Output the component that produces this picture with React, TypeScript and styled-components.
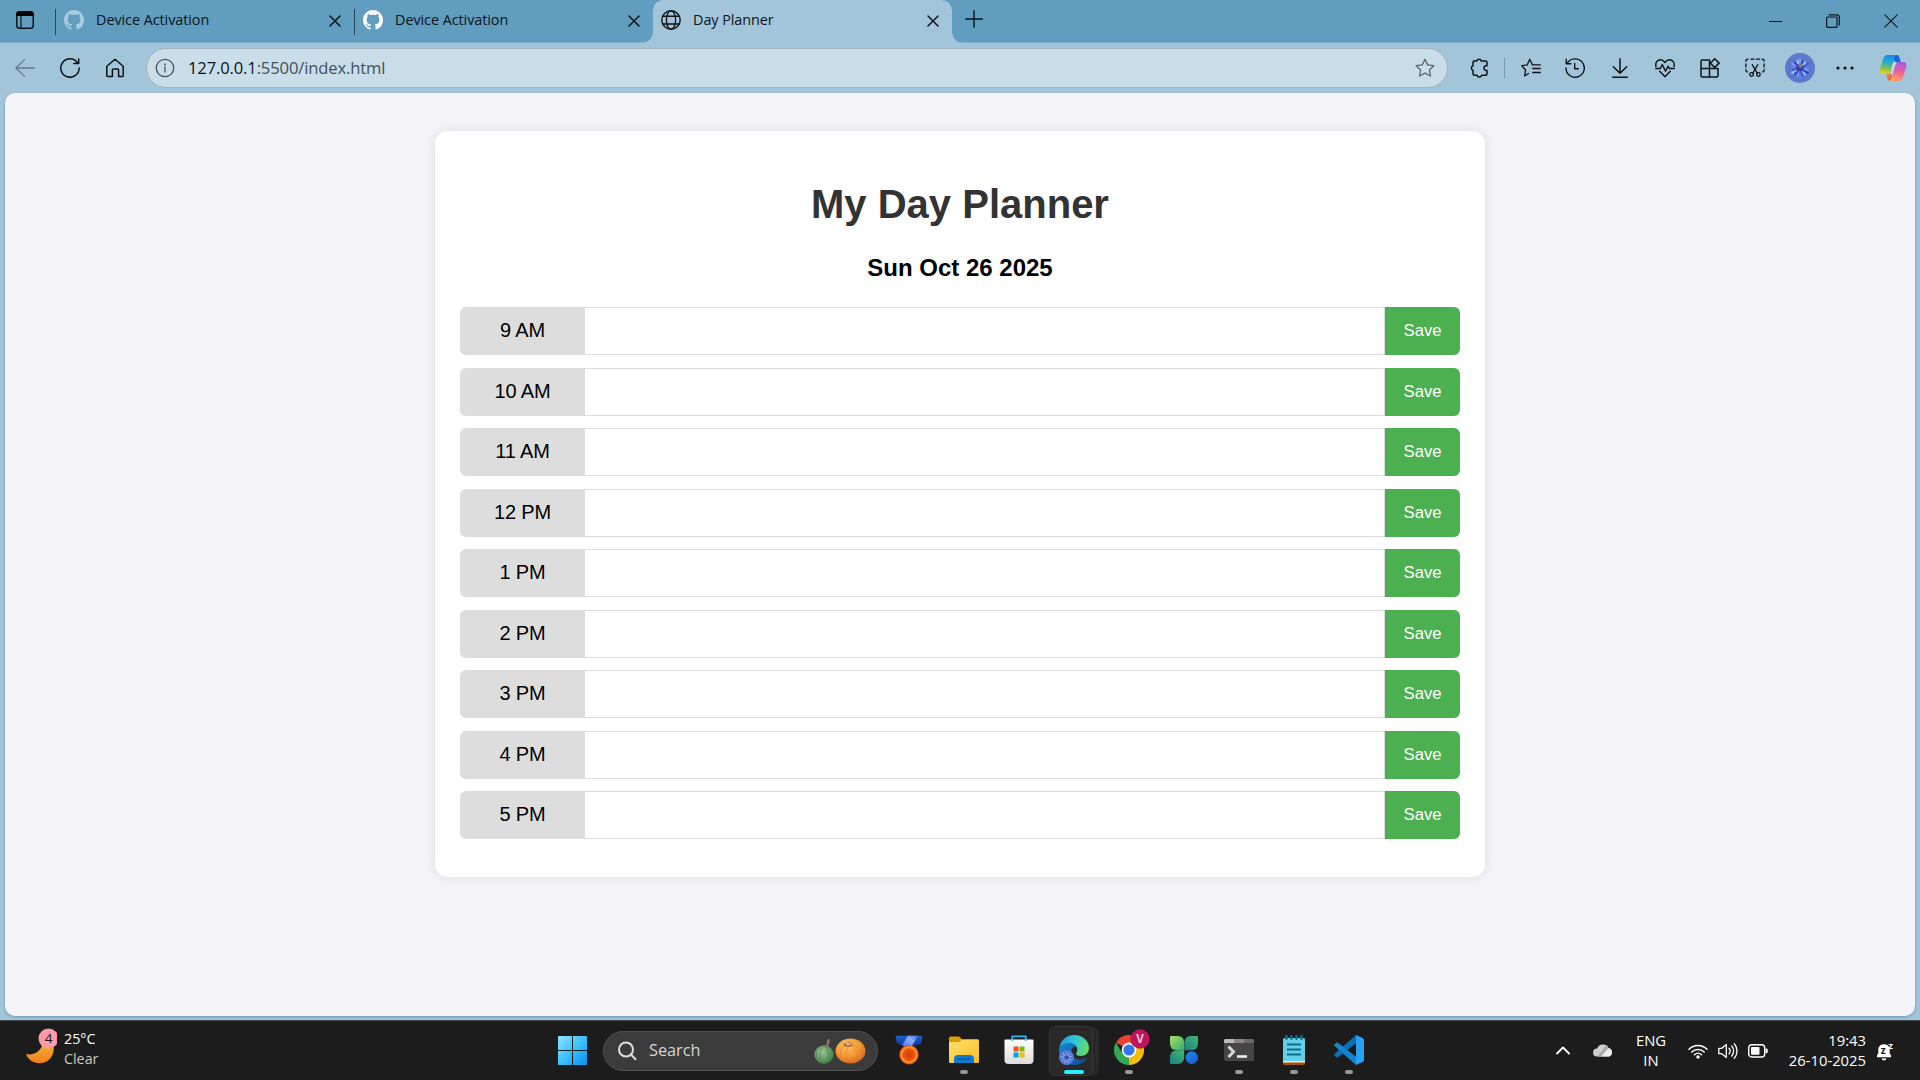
import React from "react";
import styled, { createGlobalStyle, css } from "styled-components";

const GlobalStyle = createGlobalStyle`
  *, *::before, *::after { box-sizing: border-box; }
  html, body { margin: 0; padding: 0; overflow: hidden; }
  svg { display: block; flex: none; }
`;

const uiFont = `"Open Sans", "Noto Sans", sans-serif`;
const pageFont = `"Liberation Sans", Arial, sans-serif`;

const Desktop = styled.div`
  width: 1920px;
  height: 1080px;
  display: flex;
  flex-direction: column;
  overflow: hidden;
  background: #a3c5da;
  font-family: ${uiFont};
  color: #0b141a;
`;

/* ---------- tab strip ---------- */

const TabStrip = styled.header`
  height: 43px;
  flex: none;
  display: flex;
  background: #619dbf;
  border-bottom: 1px solid #7fb0cc;
`;

const WorkspaceButton = styled.div`
  width: 55px;
  padding: 11px 0 0 16px;
`;

const TabItem = styled.div<{ $active?: boolean; $width: number }>`
  width: ${(p) => p.$width}px;
  height: ${(p) => (p.$active ? 43 : 42)}px;
  flex: none;
  display: flex;
  align-items: flex-start;
  padding: 10px 11px 0 ${(p) => (p.$active ? 8 : 9)}px;
  font-size: 14.4px;
  line-height: 20px;
  position: relative;
  ${(p) =>
    p.$active
      ? css`
          background: #a3c5da;
          border-radius: 10px 10px 0 0;
          &::before,
          &::after {
            content: "";
            position: absolute;
            bottom: 0;
            width: 10px;
            height: 10px;
          }
          &::before {
            left: -10px;
            background: radial-gradient(circle at 0 0, #619dbf 9px, #a3c5da 10px);
          }
          &::after {
            right: -10px;
            background: radial-gradient(circle at 100% 0, #619dbf 9px, #a3c5da 10px);
          }
        `
      : css`
          &::before {
            content: "";
            position: absolute;
            left: 0;
            top: 9px;
            width: 1px;
            height: 26px;
            background: #27485b;
          }
        `}
`;

const TabTitle = styled.span`
  flex: 1;
  margin-left: 12px;
  letter-spacing: -0.06px;
`;

const CloseSlot = styled.span`
  width: 16px;
  height: 22px;
  display: grid;
  place-items: center;
`;

const NewTab = styled.div`
  padding: 10px 0 0 13px;
  flex: 1;
`;

const WindowButtons = styled.div`
  display: flex;
  height: 42px;
  align-items: center;
`;

const WindowButton = styled.div`
  width: 58px;
  display: grid;
  place-items: center;
`;

/* ---------- toolbar ---------- */

const Toolbar = styled.nav`
  height: 50px;
  flex: none;
  display: flex;
  align-items: center;
  padding-left: 2px;
`;

const ToolSlot = styled.div<{ $w?: number; $pad?: string }>`
  width: ${(p) => p.$w ?? 45}px;
  padding: ${(p) => p.$pad ?? "0"};
  flex: none;
  display: grid;
  place-items: center;
`;

const AddressBar = styled.div`
  width: 1302px;
  height: 40px;
  margin-left: 9px;
  flex: none;
  display: flex;
  align-items: center;
  padding: 0 12px 0 8px;
  border: 1px solid #a1b4c1;
  border-radius: 20px;
  background: #cadee9;
`;

const Url = styled.span`
  flex: 1;
  margin-left: 13px;
  font-size: 16.6px;
  line-height: 24px;
  letter-spacing: -0.15px;
  color: #41515b;
  b {
    font-weight: 400;
    color: #0d1418;
  }
`;

const ToolDivider = styled.div`
  width: 1px;
  height: 20px;
  margin-right: 1px;
  background: #7c99aa;
`;

/* ---------- page ---------- */

const Viewport = styled.main`
  width: 1910px;
  height: 923px;
  flex: none;
  margin: 0 5px 4px;
  padding-top: 38px;
  border-radius: 10px;
  background: #f4f4f9;
  box-shadow: 0 1px 3px rgba(30, 80, 110, 0.4);
  font-family: ${pageFont};
`;

const Planner = styled.section`
  width: 1050px;
  height: 746px;
  margin: 0 auto;
  padding: 50px 25px 0;
  border-radius: 12.5px;
  background: #fff;
  box-shadow: 0 0 12.5px rgba(0, 0, 0, 0.1);
`;

const Title = styled.h1`
  margin: 0 0 27px;
  font-size: 40px;
  line-height: 46px;
  text-align: center;
  color: #333;
`;

const Today = styled.h2`
  margin: 0 0 25px;
  font-size: 24px;
  line-height: 28px;
  text-align: center;
  color: #000;
`;

const Row = styled.div`
  display: flex;
  height: 48px;
  margin-bottom: 12.5px;
`;

const Hour = styled.div`
  width: 125px;
  padding-bottom: 1px;
  display: grid;
  place-items: center;
  border-radius: 6px 0 0 6px;
  background: #ddd;
  color: #000;
  font-size: 20px;
  letter-spacing: -0.15px;
`;

const Note = styled.textarea`
  flex: 1;
  min-width: 0;
  padding: 12px;
  border: 1px solid #ddd;
  border-left: none;
  outline: none;
  resize: none;
  background: #fff;
  font: 16.67px ${pageFont};
`;

const SaveButton = styled.button`
  width: 75px;
  padding: 0;
  border: none;
  border-radius: 0 6px 6px 0;
  background: #4caf50;
  color: #fff;
  font: 16.67px ${pageFont};
`;

/* ---------- taskbar ---------- */

const Taskbar = styled.footer`
  height: 60px;
  flex: none;
  display: flex;
  align-items: center;
  border-top: 1px solid #454a4c;
  background: #1c1c1c;
  color: #fff;
  font-size: 14.8px;
`;

const Weather = styled.div`
  width: 544px;
  display: flex;
  padding-left: 26px;
  align-items: center;
  line-height: 20px;
`;

const WeatherText = styled.div`
  margin-left: 7px;
  padding-bottom: 3px;
  font-size: 14.3px;
  span {
    display: block;
    color: #c9c9c9;
  }
`;

const StartButton = styled.div`
  width: 59px;
  padding-left: 14px;
`;

const SearchBox = styled.div`
  width: 275px;
  height: 40px;
  display: flex;
  align-items: center;
  padding: 0 11px 0 13px;
  border: 1px solid #505050;
  border-radius: 20px;
  background: #3b3b3b;
  font-size: 16.3px;
  color: #d6d6d6;
  span {
    flex: 1;
    margin-left: 12px;
    padding-bottom: 1px;
  }
`;

const Apps = styled.div`
  display: flex;
  margin-left: 3px;
`;

const AppSlot = styled.div<{ $focused?: boolean }>`
  width: 55px;
  height: 50px;
  display: flex;
  flex-direction: column;
  align-items: center;
  padding: 9px 0 0;
  ${(p) =>
    p.$focused &&
    css`
      width: 44px;
      margin: 0 8px 0 3px;
      padding: 8px 0 0 5px;
      border: 1px solid #353535;
      border-radius: 6px;
      background: #292929;
      box-shadow: 5px 0 0 -1px #272727, 6px 0 0 -1px #333;
    `}
`;

const Indicator = styled.i<{ $focused?: boolean }>`
  width: ${(p) => (p.$focused ? 20 : 8)}px;
  height: 4px;
  margin-top: 5px;
  border-radius: 2px;
  background: ${(p) => (p.$focused ? "#29eefc" : "#979797")};
`;

const Tray = styled.div`
  flex: 1;
  display: flex;
  align-items: center;
  justify-content: flex-end;
  padding-right: 24px;
`;

const TwoLines = styled.div<{ $align: "center" | "right"; $w: number }>`
  width: ${(p) => p.$w}px;
  padding-bottom: 2px;
  text-align: ${(p) => p.$align};
  line-height: 20px;
  white-space: pre-line;
`;

const TrayIcon = styled.div<{ $w: number; $left?: number }>`
  width: ${(p) => p.$w}px;
  padding-left: ${(p) => p.$left ?? 0}px;
  display: grid;
  place-items: center;
`;

/* ---------- icons ---------- */

type LineProps = { w?: number; h?: number; sw?: number; color?: string; children: React.ReactNode };

const Line = ({ w = 20, h, sw = 1.3, color = "#0b1318", children }: LineProps) => (
  <svg
    width={w}
    height={h ?? w}
    viewBox={`0 0 ${w} ${h ?? w}`}
    fill="none"
    stroke={color}
    strokeWidth={sw}
    strokeLinecap="round"
    strokeLinejoin="round"
  >
    {children}
  </svg>
);

const GitHubMark = ({ color }: { color: string }) => (
  <svg width="20" height="20" viewBox="0 0 16 16" fill={color}>
    <path d="M8 0C3.58 0 0 3.58 0 8c0 3.54 2.29 6.53 5.47 7.59.4.07.55-.17.55-.38 0-.19-.01-.82-.01-1.49-2.01.37-2.53-.49-2.69-.94-.09-.23-.48-.94-.82-1.13-.28-.15-.68-.52-.01-.53.63-.01 1.08.58 1.23.82.72 1.21 1.87.87 2.33.66.07-.52.28-.87.51-1.07-1.78-.2-3.64-.89-3.64-3.95 0-.87.31-1.59.82-2.15-.08-.2-.36-1.02.08-2.12 0 0 .67-.21 2.2.82.64-.18 1.32-.27 2-.27s1.36.09 2 .27c1.53-1.04 2.2-.82 2.2-.82.44 1.1.16 1.92.08 2.12.51.56.82 1.27.82 2.15 0 3.07-1.87 3.75-3.65 3.95.29.25.54.73.54 1.48 0 1.07-.01 1.93-.01 2.2 0 .21.15.46.55.38A8.01 8.01 0 0 0 16 8c0-4.42-3.58-8-8-8Z" />
  </svg>
);

const WorkspaceIcon = () => (
  <svg width="18" height="18" viewBox="0 0 18 18" fill="none">
    <rect x=".8" y=".8" width="16.4" height="16.4" rx="2.8" stroke="#101418" strokeWidth="1.5" />
    <path d="M.3 5V3Q.3.3 3 .3h12Q17.7.3 17.7 3v2z" fill="#000" />
    <path d="M5 5v12" stroke="#101418" strokeWidth="1.2" />
  </svg>
);

const GlobeIcon = () => (
  <Line sw={1.4} color="#101418">
    <circle cx="10" cy="10" r="9.2" />
    <ellipse cx="10" cy="10" rx="4.6" ry="9.2" />
    <path d="M1.7 6.3h16.6M1.7 14h16.6" />
  </Line>
);

const CloseIcon = () => (
  <Line w={12} sw={1.5}>
    <path d="M1 1l10 10M11 1L1 11" />
  </Line>
);

const starPath = "M10 1.3l2.7 5.6 6.1.8-4.4 4.3 1 6L10 15.2 4.6 18l1-6L1.2 7.7l6.1-.8z";

const Scissors = () => (
  <Line>
    <path d="M3 1.2h-.4A1.7 1.7 0 0 0 .9 2.9v.4M6 1.2h3M11.5 1.2h3M17 1.2h.4a1.7 1.7 0 0 1 1.7 1.7v.4M.9 6v3M19.100 6v3M.9 11.500v.7a1.6 1.6 0 0 0 1.600 1.6M19.100 11.500v.7a1.6 1.6 0 0 1-1.600 1.6" />
    <path d="M7.200 6.700l4.900 8.300M12.800 6.700L7.900 15" />
    <circle cx="6.6" cy="16.5" r="1.8" />
    <circle cx="13.4" cy="16.5" r="1.8" />
  </Line>
);

const petals = Array.from({ length: 18 }, (_, i) => i * 20);
const petalShades = ["#7f9ff0", "#2547d6", "#a9c2fa", "#3a5fe0", "#5f86ee"];

const FlowerAvatar = ({ size }: { size: number }) => (
  <svg width={size} height={size} viewBox="0 0 30 30">
    <circle cx="15" cy="15" r="15" fill="#5b7acb" />
    <circle cx="15" cy="15.5" r="7.5" fill="#2f50cf" />
    <g transform="translate(15 15.5)">
      {petals.map((a, i) => (
        <path
          key={a}
          transform={`rotate(${a}) scale(1 ${i % 3 === 0 ? 1.1 : 0.95})`}
          d="M0-2L-1.500-8.500-.6-8 0-10.500.8-8 1.700-8.500z"
          fill={petalShades[i % 5]}
        />
      ))}
    </g>
    <circle cx="15" cy="14.5" r="3.6" fill="#3c3f96" />
    <circle cx="15.500" cy="12.500" r="2.200" fill="#857c98" />
  </svg>
);

const CopilotIcon = () => (
  <svg width="28" height="28" viewBox="0 0 28 28">
    <defs>
      <linearGradient id="cpA" x1=".5" y1="0" x2=".35" y2="1">
        <stop offset="0" stopColor="#168ee9" />
        <stop offset=".35" stopColor="#20a9d5" />
        <stop offset=".65" stopColor="#6fbf62" />
        <stop offset="1" stopColor="#f4cf1c" />
      </linearGradient>
      <linearGradient id="cpB" x1=".6" y1="0" x2=".3" y2="1">
        <stop offset="0" stopColor="#a45be8" />
        <stop offset=".45" stopColor="#ed5b9d" />
        <stop offset="1" stopColor="#ffa45c" />
      </linearGradient>
      <linearGradient id="cpC" x1="0" y1="0" x2="1" y2="1">
        <stop offset="0" stopColor="#1750d1" />
        <stop offset="1" stopColor="#1b70e0" />
      </linearGradient>
      <linearGradient id="cpD" x1="0" y1="0" x2="1" y2="1">
        <stop offset="0" stopColor="#f9a02d" />
        <stop offset="1" stopColor="#e83f42" />
      </linearGradient>
    </defs>
    <path d="M12 1h5.500c1.800 0 2.500 1.200 3 2.800l1.300 4.500h-5.500z" fill="url(#cpC)" />
    <path d="M7 19h5l3 8h-3.500c-1.800 0-2.700-1.200-3.200-2.800z" fill="url(#cpD)" />
    <path d="M8.500 1h9.200c-1.200.5-1.700 1.600-2.200 3.200l-4 13c-.6 1.900-1.600 2.800-3.600 2.800H3.500C1 20 0 18 .7 15.500l3.600-11C5 2.200 6.200 1 8.500 1z" fill="url(#cpA)" />
    <path d="M19.500 27h-9.200c1.200-.5 1.700-1.600 2.200-3.200l4-13c.6-1.900 1.600-2.800 3.600-2.800h4.400c2.500 0 3.500 2 2.800 4.500l-3.600 11c-.7 2.300-1.900 3.500-4.200 3.500z" fill="url(#cpB)" />
    <path d="M12.600 13.500l1.200-3.700c.5-1.200 1.300-1.800 2.500-1.800h1.400c-.7.6-1.100 1.400-1.500 2.700l-3 9.500h-2.100c.6-.6 1-1.500 1.300-2.500z" fill="#c4dcea" />
  </svg>
);

const MoonIcon = () => (
  <svg width="31" height="48" viewBox="0 -7 31 48">
    <defs>
      <linearGradient id="moon" x1="0" y1="0" x2="0" y2="1">
        <stop offset="0" stopColor="#f5c13b" />
        <stop offset="1" stopColor="#f07d1c" />
      </linearGradient>
    </defs>
    <path d="M17 3c2 10-6 19.500-17 17 2 5.500 7 9.300 13.500 9.300C21.500 29.300 27.700 23 27.700 15V3z" fill="url(#moon)" />
    <circle cx="22.5" cy="4.5" r="10" fill="#ff9aa5" />
    <text x="22.5" y="9.300" textAnchor="middle" fontSize="13.5" fontFamily="Open Sans, sans-serif" fill="#221416">4</text>
  </svg>
);

const WindowsIcon = () => (
  <svg width="29" height="29" viewBox="0 0 29 29">
    <defs>
      <linearGradient id="win" x1="0" y1="0" x2="29" y2="29" gradientUnits="userSpaceOnUse">
        <stop offset="0" stopColor="#8be3ff" />
        <stop offset=".5" stopColor="#3cc1fb" />
        <stop offset="1" stopColor="#0b8ff2" />
      </linearGradient>
    </defs>
    <path d="M0 1a1 1 0 0 1 1-1h13v14H0zM15 0h13a1 1 0 0 1 1 1v13H15zM0 15h14v14H1a1 1 0 0 1-1-1zM15 15h14v13a1 1 0 0 1-1 1H15z" fill="url(#win)" />
  </svg>
);

const PumpkinsIcon = () => (
  <svg width="52" height="28" viewBox="0 0 52 28">
    <defs>
      <radialGradient id="pkG" cx=".4" cy=".35" r=".7">
        <stop offset="0" stopColor="#9cc795" />
        <stop offset="1" stopColor="#3f7a49" />
      </radialGradient>
      <radialGradient id="pkO" cx=".4" cy=".3" r=".75">
        <stop offset="0" stopColor="#ffc266" />
        <stop offset=".6" stopColor="#f2932f" />
        <stop offset="1" stopColor="#cf5f1b" />
      </radialGradient>
    </defs>
    <ellipse cx="10" cy="17.5" rx="9.6" ry="9.3" fill="url(#pkG)" />
    <path d="M10 9c-5 4-5 13-1 18M11 9c5 5 4 13 0 18M8 9C2 11 1 19 4 24" stroke="#4b8552" strokeWidth=".7" fill="none" />
    <path d="M10.500 10c2-2 2.500-4 2.500-7l2.500-1.500C16.500 5 14.500 9 13 10.500z" fill="#8d7463" />
    <ellipse cx="36.500" cy="14" rx="15" ry="12.500" fill="url(#pkO)" />
    <path d="M33 8c-7 2-9 10-4 17M35 9c-4 5-4 11 0 17M38 9c5 4 6 11 3 17M39 8c7 2 9 9 6 15" stroke="#e0812a" strokeWidth=".7" fill="none" />
    <ellipse cx="34" cy="7.500" rx="4.500" ry="2.500" fill="#b87030" />
    <path d="M29.500 5.500c2-.5 3.500 0 4.300 2l3-1" stroke="#e3c8a0" strokeWidth="1.500" fill="none" />
  </svg>
);

const MedalIcon = () => (
  <svg width="30" height="30" viewBox="0 0 30 30">
    <defs>
      <linearGradient id="ribbon" x1="0" y1="0" x2="0" y2="1">
        <stop offset="0" stopColor="#1b62d0" />
        <stop offset="1" stopColor="#142f96" />
      </linearGradient>
      <linearGradient id="shine" x1="0" y1="1" x2="1" y2="0">
        <stop offset="0" stopColor="#4a6ff0" />
        <stop offset=".6" stopColor="#86b2ff" />
        <stop offset="1" stopColor="#3c66e0" />
      </linearGradient>
      <radialGradient id="medal">
        <stop offset="0" stopColor="#d63c05" />
        <stop offset=".6" stopColor="#e9560a" />
        <stop offset=".75" stopColor="#ff9b2e" />
        <stop offset="1" stopColor="#e34312" />
      </radialGradient>
    </defs>
    <path d="M3 .8h24c1 0 1.300.8 1.200 1.600L27.500 7c0 1-1 1.600-2 2l-7 2.500h-7L4.500 9c-1-.4-2-1-2-2l-.7-4.600C1.700 1.600 2 .8 3 .8z" fill="url(#ribbon)" />
    <path d="M8 10.200L14 .8h10l-6.500 10.700h-6z" fill="url(#shine)" />
    <circle cx="15" cy="19.700" r="9.700" fill="url(#medal)" />
  </svg>
);

const FolderIcon = () => (
  <svg width="30" height="30" viewBox="0 0 30 30">
    <defs>
      <linearGradient id="fold" x1="0" y1="0" x2="1" y2="1">
        <stop offset="0" stopColor="#ffdf6c" />
        <stop offset="1" stopColor="#fdbf27" />
      </linearGradient>
    </defs>
    <path d="M0 3a1.500 1.500 0 0 1 1.500-1.500H10L13 4h15.500A1.500 1.500 0 0 1 30 5.500V10H0z" fill="#dd9f04" />
    <path d="M0 7h10l3-2h15.500A1.500 1.500 0 0 1 30 6.500V26.500a1.500 1.500 0 0 1-1.500 1.500h-27A1.500 1.500 0 0 1 0 26.500z" fill="url(#fold)" />
    <path d="M5 28v-4a4 4 0 0 1 4-4h12a4 4 0 0 1 4 4v4z" fill="#0f78cf" />
    <path d="M9 24h12" stroke="#084c88" strokeWidth="1.3" />
  </svg>
);

const StoreIcon = () => (
  <svg width="30" height="30" viewBox="0 0 30 30">
    <defs>
      <linearGradient id="bag" x1="0" y1="0" x2="0" y2="1">
        <stop offset="0" stopColor="#fff" />
        <stop offset="1" stopColor="#dcdcdc" />
      </linearGradient>
    </defs>
    <path d="M8.300 6V1.300h13.400V6" fill="none" stroke="#22b8ef" strokeWidth="1.800" />
    <path d="M.5 5.500a1 1 0 0 1 1-1h27a1 1 0 0 1 1 1V25a4 4 0 0 1-4 4h-21a4 4 0 0 1-4-4z" fill="url(#bag)" />
    <path d="M8.300 3v3M21.700 3v3" stroke="#22b8ef" strokeWidth="1.500" />
    <path d="M9.500 11.500h5v5h-5z" fill="#f25022" />
    <path d="M15.500 11.500h5v5h-5z" fill="#7fba00" />
    <path d="M9.500 17.500h5v5h-5z" fill="#00a4ef" />
    <path d="M15.500 17.500h5v5h-5z" fill="#ffb900" />
  </svg>
);

const EdgeIcon = () => (
  <svg width="30" height="30" viewBox="0 0 30 30">
    <defs>
      <linearGradient id="edTop" x1="0" y1=".3" x2="1" y2=".6">
        <stop offset="0" stopColor="#2399df" />
        <stop offset=".5" stopColor="#33c5d6" />
        <stop offset="1" stopColor="#62df61" />
      </linearGradient>
      <linearGradient id="edBot" x1="0" y1="0" x2="1" y2="1">
        <stop offset="0" stopColor="#1785d8" />
        <stop offset="1" stopColor="#124a90" />
      </linearGradient>
    </defs>
    <path d="M0 14C1 6 7 0 15 0c9 0 15 6 15 13 0 5-4 8-8 8-3.500 0-5-1.300-5-2.300 0-.8 1.300-1.300 1.300-4C18.300 11 15 8.500 11 8.500 6 8.500 1.500 10 0 14z" fill="url(#edTop)" />
    <path d="M0 15C.5 10.500 5 8 10.500 8c3.500 0 6 2 7 4.500-2-1.500-5-.5-5 4C12.500 22 18 25.500 23 24.500c2-.4 4.300-2 5.200-1.500C25.500 27.500 20.500 30 15 30 6.500 30 0 23.500 0 15z" fill="url(#edBot)" />
    <g transform="translate(0 15) scale(.5)">
      <circle cx="15" cy="15" r="15" fill="#5b7bd0" />
      {petals.map((a, i) => (
        <path key={a} transform={`translate(15 15) rotate(${a})`} d="M0-2L-2-9 0-11 2-9z" fill={i % 2 ? "#4a6be0" : "#93aef0"} />
      ))}
      <circle cx="15" cy="15" r="4" fill="#354aa0" />
    </g>
  </svg>
);

const BadgedIcon = styled.svg`
  overflow: visible;
`;

const ChromeIcon = () => (
  <BadgedIcon width="30" height="30" viewBox="0 0 30 30">
    <path d="M15 15L2 7.500A15 15 0 0 1 28 7.500H15z" fill="#ea4335" />
    <path d="M15 15V7.500h13A15 15 0 0 1 15 30z" fill="#fbbc05" />
    <path d="M15 30A15 15 0 0 1 2 7.500L8.500 18.800 15 22.500l6.500-3.700z" fill="#34a853" />
    <path d="M15 30l6.600-11.500L15 15z" fill="#fbbc05" />
    <circle cx="15" cy="15" r="7.400" fill="#fff" />
    <circle cx="15" cy="15" r="5.600" fill="#2f78ee" />
    <circle cx="26" cy="4" r="9.700" fill="#bd165c" />
    <text x="26" y="8.200" textAnchor="middle" fontSize="11.5" fontWeight="700" fontFamily="Open Sans, sans-serif" fill="#f2c5d8">V</text>
  </BadgedIcon>
);

const CloverIcon = () => (
  <svg width="30" height="30" viewBox="0 0 30 30">
    <defs>
      <linearGradient id="cl1" x1="0" y1="0" x2="1" y2="1">
        <stop offset="0" stopColor="#a8e063" />
        <stop offset="1" stopColor="#35ab70" />
      </linearGradient>
      <linearGradient id="cl2" x1="1" y1="0" x2="0" y2="1">
        <stop offset="0" stopColor="#42ba6b" />
        <stop offset="1" stopColor="#1b7f86" />
      </linearGradient>
      <linearGradient id="cl3" x1="0" y1="0" x2="1" y2="1">
        <stop offset="0" stopColor="#1f8ae8" />
        <stop offset="1" stopColor="#145ad0" />
      </linearGradient>
    </defs>
    <path d="M1 2q0-1 1-1h6.500q6.500 0 6.700 7v7.200H8q-7 0-7-6.700z" fill="url(#cl1)" />
    <path d="M29 2q0-1-1-1h-6q-6.500 0-6.700 7v7.200H22q7 0 7-6.700z" fill="url(#cl2)" />
    <path d="M1 28q0 1 1 1h6.500q6.500 0 6.700-7v-6.800H8Q1 15.200 1 22z" fill="url(#cl2)" />
    <circle cx="22.800" cy="22.600" r="6.300" fill="url(#cl3)" />
  </svg>
);

const TerminalIcon = () => (
  <svg width="30" height="30" viewBox="0 0 30 30">
    <rect x="0" y="4" width="30" height="22" rx="1.5" fill="#454545" />
    <path d="M0 8V5.500A1.500 1.500 0 0 1 1.500 4H10v4z" fill="#b9b9b9" />
    <path d="M10 4h10v4H10z" fill="#8c8489" />
    <path d="M20 4h8.500A1.500 1.500 0 0 1 30 5.500V8H20z" fill="#6a6a6a" />
    <path d="M4.500 11.500l5 5.200-5 5.300" fill="none" stroke="#d7d7d7" strokeWidth="3" />
    <path d="M13 21.500h10" stroke="#eee" strokeWidth="2.6" />
  </svg>
);

const NotepadIcon = () => (
  <svg width="30" height="30" viewBox="0 0 30 30">
    <path d="M4 26h22v2.500a1.500 1.500 0 0 1-1.500 1.500h-19A1.500 1.500 0 0 1 4 28.500z" fill="#a4500f" />
    <path d="M4 24h22v3.500H4z" fill="#f0e9e0" />
    <path d="M4 4.500A1.500 1.500 0 0 1 5.500 3h19A1.500 1.500 0 0 1 26 4.500V26H4z" fill="#65cfe6" />
    <path d="M8 9.500h14M8 14.500h14M8 19.500h14" stroke="#0c6d8b" strokeWidth="1.9" />
    <path d="M7.500 1.500v2M12.500 1.500v2M17.500 1.500v2M22.500 1.500v2" stroke="#0f6e88" strokeWidth="2.8" strokeLinecap="round" />
  </svg>
);

const CodeIcon = () => (
  <svg width="30" height="30" viewBox="0 0 30 30">
    <path d="M22 0v8.300L4 22.300q-.8.500-1.500 0L.5 20.500q-.8-.8 0-1.600z" fill="#0a6fb8" />
    <path d="M22 30v-8.300L4 7.700q-.8-.5-1.500 0L.5 9.500q-.8.8 0 1.600z" fill="#1384cf" />
    <path d="M22 0l7 3.300q1 .5 1 1.700v20q0 1.200-1 1.700L22 30z" fill="#27a1f2" />
  </svg>
);

const CloudIcon = () => (
  <svg width="20" height="15" viewBox="0 0 20 15">
    <path d="M4 13.500a4 4 0 0 1 .2-8A6.200 6.200 0 0 1 15.500 5a4.400 4.400 0 0 1 .3 8.500z" fill="#cfcfcf" />
    <path d="M8 13.500L15.500 5a4.400 4.400 0 0 1 .3 8.500z" fill="#ededed" />
    <path d="M4 13.500L13.500 2A6 6 0 0 1 15.500 5L8 13.500z" fill="#aaa" />
  </svg>
);

const BellIcon = () => (
  <BadgedIcon width="21" height="22" viewBox="0 0 21 22">
    <path d="M2 17.200v-2l1.300-1.600V8.500a6 6 0 0 1 11.400 0v5.100l1.300 1.600v2zM6.500 18.500h5q-.5 2-2.500 2t-2.500-2z" fill="#fff" />
    <text x="5.800" y="13.500" fontSize="10" fontWeight="700" fontFamily="Open Sans, sans-serif" fill="#1c1c1c">z</text>
    <text x="13.200" y="8.500" fontSize="9.500" fontWeight="700" fontFamily="Open Sans, sans-serif" fill="#fff">z</text>
  </BadgedIcon>
);

/* ---------- data ---------- */

const hours = ["9 AM", "10 AM", "11 AM", "12 PM", "1 PM", "2 PM", "3 PM", "4 PM", "5 PM"];

const tabs = [
  { title: "Device Activation", icon: <GitHubMark color="#a9cbe0" />, width: 299 },
  { title: "Device Activation", icon: <GitHubMark color="#fff" />, width: 299 },
  { title: "Day Planner", icon: <GlobeIcon />, width: 299, active: true },
];

const apps = [
  { name: "medal", icon: <MedalIcon /> },
  { name: "files", icon: <FolderIcon />, running: true },
  { name: "store", icon: <StoreIcon /> },
  { name: "edge", icon: <EdgeIcon />, running: true, focused: true },
  { name: "chrome", icon: <ChromeIcon />, running: true },
  { name: "clover", icon: <CloverIcon /> },
  { name: "terminal", icon: <TerminalIcon />, running: true },
  { name: "notepad", icon: <NotepadIcon />, running: true },
  { name: "code", icon: <CodeIcon />, running: true },
];

export default function App() {
  return (
    <Desktop>
      <GlobalStyle />
      <TabStrip>
        <WorkspaceButton>
          <WorkspaceIcon />
        </WorkspaceButton>
        {tabs.map((t, i) => (
          <TabItem key={i} $width={t.width} $active={t.active}>
            {t.icon}
            <TabTitle>{t.title}</TabTitle>
            <CloseSlot>
              <CloseIcon />
            </CloseSlot>
          </TabItem>
        ))}
        <NewTab>
          <Line w={18} sw={1.4}>
            <path d="M9 .7v16.600M.7 9h16.600" />
          </Line>
        </NewTab>
        <WindowButtons>
          <WindowButton>
            <Line w={13} sw={1}>
              <path d="M.5 6.500h12" />
            </Line>
          </WindowButton>
          <WindowButton>
            <Line w={14} sw={1.2}>
              <rect x=".6" y="3" width="10.400" height="10.400" rx="1" />
              <path d="M3.200.8h7.300q2.800 0 2.800 2.800v7.300" />
            </Line>
          </WindowButton>
          <WindowButton>
            <Line w={14} sw={1.1}>
              <path d="M.8.8l12.400 12.400M13.200.8L.8 13.200" />
            </Line>
          </WindowButton>
        </WindowButtons>
      </TabStrip>

      <Toolbar>
        <ToolSlot>
          <Line color="#5f7b8a">
            <path d="M19.300 10H.9M9.500 1.600L.9 10l8.600 8.400" />
          </Line>
        </ToolSlot>
        <ToolSlot>
          <Line sw={1.5}>
            <path d="M19.200 10A9.200 9.200 0 1 1 17.400 4.600M18.700.9V5.600H13.800" />
          </Line>
        </ToolSlot>
        <ToolSlot>
          <Line sw={1.5}>
            <path d="M1.800 8.200L10 1.300l8.200 6.900v9.200q0 1.200-1.200 1.200h-3.400V12q0-1-1-1H8.400q-1 0-1 1v6.600H3q-1.200 0-1.200-1.200z" />
          </Line>
        </ToolSlot>
        <AddressBar>
          <Line sw={1.3} color="#46545d">
            <circle cx="10" cy="10" r="8.700" />
            <path d="M10 9v5" />
            <circle cx="10" cy="6.500" r=".4" />
          </Line>
          <Url>
            <b>127.0.0.1</b>:5500/index.html
          </Url>
          <Line color="#56656e">
            <path d={starPath} />
          </Line>
        </AddressBar>
        <ToolSlot $w={56} $pad="0 0 0 6px">
          <Line sw={1.5}>
            <path d="M4.500 3h3.200a2.400 2.400 0 0 1 4.600 0h4.200q1.500 0 1.500 1.500v3.200h-1.200a2.400 2.400 0 0 0 0 4.700H18v3.300q0 1.500-1.500 1.500h-3.800a2.400 2.400 0 0 1-4.700 0H5.500Q4 17.200 4 15.700v-3.300a2.500 2.500 0 0 1 0-4.700V4.500Q4 3 5.500 3z" />
          </Line>
        </ToolSlot>
        <ToolDivider />
        <ToolSlot $w={49}>
          <Line>
            <path d="M7.500 15.500L3.600 18l1-6L.8 7.700l5.400-.8L8.700 1.300l2.700 5.600h7.900M11.700 10.500h7.600M11.700 14.500h7.600" />
          </Line>
        </ToolSlot>
        <ToolSlot $w={42} $pad="0 2px 0 0">
          <Line sw={1.4}>
            <path d="M2.300 5.200A9.200 9.200 0 1 1 .9 10M1.200 1.200v4.500h4.600M9.700 5.500v5.300h3.700" />
          </Line>
        </ToolSlot>
        <ToolSlot>
          <Line sw={1.5}>
            <path d="M10 .8v14M3.300 8.800l6.700 6.500 6.700-6.500M2.800 19.200h14.400" />
          </Line>
        </ToolSlot>
        <ToolSlot>
          <Line sw={1.4}>
            <path d="M1 8.500C0 4.500 2.500 1.800 5.400 1.800c2 0 3.500 1.200 4.600 2.800 1.100-1.600 2.600-2.800 4.600-2.800C17.500 1.800 20 4.500 19 8.500M4.700 13.200L10 18.700l5.300-5.500" />
            <path d="M.7 10.500h4.600l2-4 3.200 6.700 2.500-5 1.300 2.300h5" />
          </Line>
        </ToolSlot>
        <ToolSlot>
          <Line sw={1.5}>
            <path d="M9.200 2H2.500Q1 2 1 3.500v14Q1 19 2.500 19h14q1.500 0 1.500-1.500V10.500H1M9.500 2v17" />
            <path d="M14.700.7l4.400 4.400-4.400 4.400-4.400-4.400z" />
          </Line>
        </ToolSlot>
        <ToolSlot>
          <Scissors />
        </ToolSlot>
        <ToolSlot>
          <FlowerAvatar size={30} />
        </ToolSlot>
        <ToolSlot>
          <svg width="18" height="4" viewBox="0 0 18 4" fill="#0b1318">
            <circle cx="2" cy="2" r="1.600" />
            <circle cx="9" cy="2" r="1.600" />
            <circle cx="16" cy="2" r="1.600" />
          </svg>
        </ToolSlot>
        <ToolSlot $w={52}>
          <CopilotIcon />
        </ToolSlot>
      </Toolbar>

      <Viewport>
        <Planner>
          <Title>My Day Planner</Title>
          <Today>Sun Oct 26 2025</Today>
          {hours.map((h) => (
            <Row key={h}>
              <Hour>{h}</Hour>
              <Note />
              <SaveButton>Save</SaveButton>
            </Row>
          ))}
        </Planner>
      </Viewport>

      <Taskbar>
        <Weather>
          <MoonIcon />
          <WeatherText>
            25°C
            <span>Clear</span>
          </WeatherText>
        </Weather>
        <StartButton>
          <WindowsIcon />
        </StartButton>
        <SearchBox>
          <Line w={20} sw={2} color="#dedede">
            <circle cx="9" cy="8.500" r="7" />
            <path d="M14 13.500l4.500 4.700" />
          </Line>
          <span>Search</span>
          <PumpkinsIcon />
        </SearchBox>
        <Apps>
          {apps.map((a) => (
            <AppSlot key={a.name} $focused={a.focused}>
              {a.icon}
              {a.running && <Indicator $focused={a.focused} />}
            </AppSlot>
          ))}
        </Apps>
        <Tray>
          <TrayIcon $w={40}>
            <Line w={14} h={9} sw={1.8} color="#fff">
              <path d="M1 7.500l6-6 6 6" />
            </Line>
          </TrayIcon>
          <TrayIcon $w={40}>
            <CloudIcon />
          </TrayIcon>
          <TwoLines $align="center" $w={56}>{"ENG\nIN"}</TwoLines>
          <TrayIcon $w={38}>
            <Line w={20} h={16} sw={1.5} color="#fff">
              <path d="M1 6.300a12.500 12.500 0 0 1 18 0M3.800 9a8.800 8.800 0 0 1 12.400 0M6.500 11.700a5 5 0 0 1 7 0" />
              <circle cx="10" cy="14" r="1" fill="#fff" />
            </Line>
          </TrayIcon>
          <TrayIcon $w={22}>
            <Line w={20} h={18} sw={1.3} color="#fff">
              <path d="M.8 6.300h3L8.300 2.500v13L3.800 11.700h-3zM11 6.300a4 4 0 0 1 0 5.400M13.700 4a7.500 7.500 0 0 1 0 10M16.300 1.800a11 11 0 0 1 0 14.400" />
            </Line>
          </TrayIcon>
          <TrayIcon $w={38}>
            <svg width="20" height="14" viewBox="0 0 20 14">
              <rect x=".7" y=".7" width="16" height="12.300" rx="3" fill="none" stroke="#fff" strokeWidth="1.400" />
              <rect x="3" y="3" width="8.500" height="7.700" rx="1" fill="#fff" />
              <path d="M17.500 4.500h1q1.200 0 1.200 1.200v2.300q0 1.200-1.200 1.200h-1z" fill="#fff" />
            </svg>
          </TrayIcon>
          <TwoLines $align="right" $w={89}>{"19:43\n26-10-2025"}</TwoLines>
          <TrayIcon $w={30} $left={9}>
            <BellIcon />
          </TrayIcon>
        </Tray>
      </Taskbar>
    </Desktop>
  );
}
